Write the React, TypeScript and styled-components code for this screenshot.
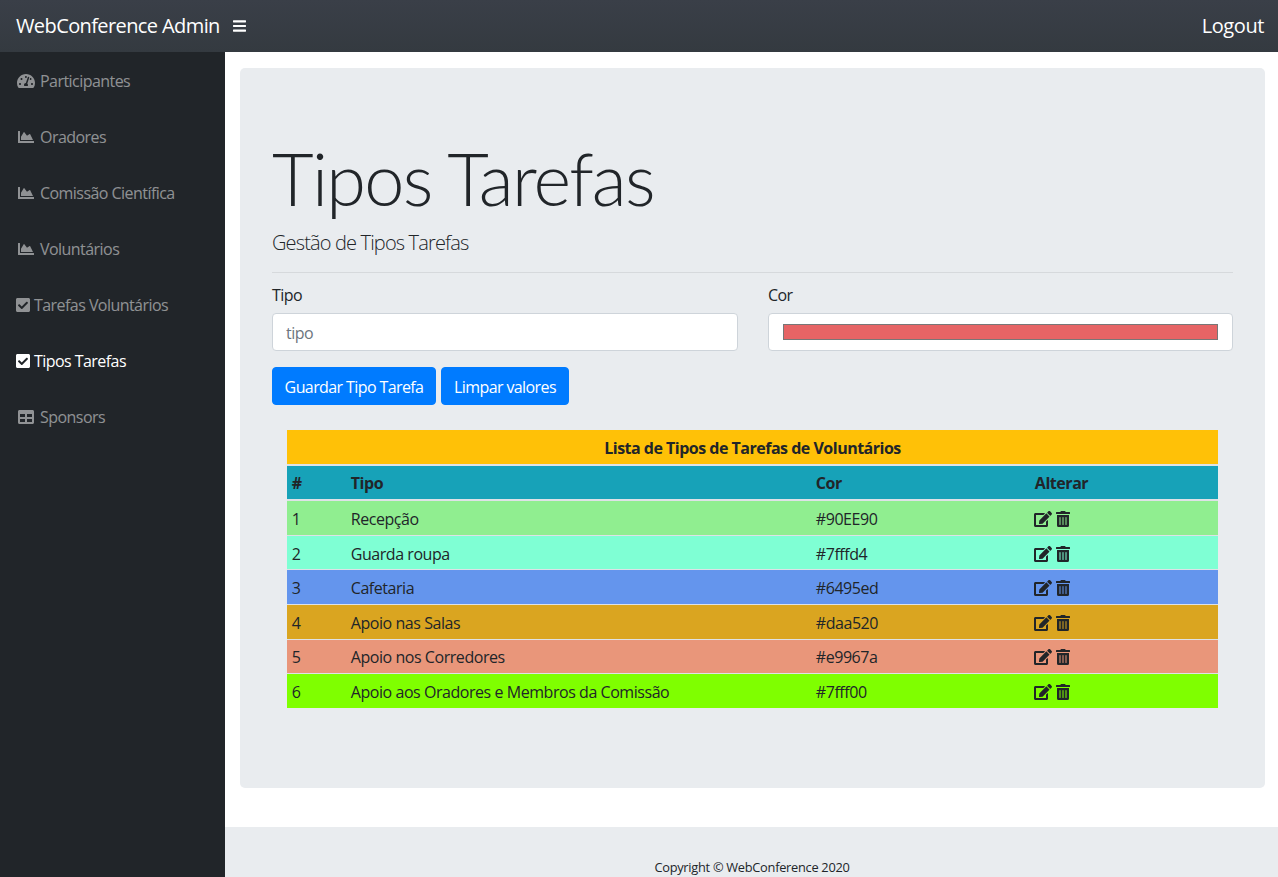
import React from "react";
import styled, { createGlobalStyle } from "styled-components";
import { FaTachometerAlt, FaChartArea, FaCheckSquare, FaTable, FaBars, FaEdit, FaTrashAlt } from "react-icons/fa";

const FONT = `"Open Sans", "Noto Sans", "Liberation Sans", sans-serif`;

const Global = createGlobalStyle`
  * { box-sizing: border-box; }
  html, body { margin: 0; padding: 0; height: 877px; overflow: hidden; }
  body { font-family: ${FONT}; font-size: 16px; line-height: 24px; color: #212529; background: #fff; }
`;

const Page = styled.div`display: flex; flex-direction: column; height: 877px; overflow: hidden;`;
const Navbar = styled.header`
  height: 52px; flex: none; display: flex; align-items: center; padding: 0 14px 0 16px; color: #fff;
  background: linear-gradient(180deg, #3a3f48, #343a40);
`;
const Brand = styled.span`font-size: 20px; line-height: 30px; letter-spacing: -0.6px;`;
const Toggle = styled.span`display: flex; margin-left: 13px; font-size: 14px; svg { width: 13px; height: 16px; }`;
const Logout = styled.span`margin-left: auto; font-size: 20px; letter-spacing: -0.4px;`;
const Body = styled.div`flex: 1; display: flex; min-height: 0;`;
const Sidebar = styled.nav`width: 225px; flex: none; background: #212529; display: flex; flex-direction: column; padding-top: 1px;`;
const NavItem = styled.a<{ $active?: boolean }>`
  height: 56px; display: flex; align-items: center; padding: 0 16px;
  color: ${(p) => (p.$active ? "#fff" : "rgba(255,255,255,.5)")};
  letter-spacing: -0.55px;
`;
const NavIcon = styled.span<{ $w: number }>`
  flex: none; display: flex; justify-content: center; width: ${(p) => p.$w}px; margin-right: 4px;
  svg { width: ${(p) => Math.min(p.$w, 18)}px; height: 16px; }
`;
const Column = styled.div`flex: 1; display: flex; flex-direction: column; min-width: 0;`;
const Main = styled.main`flex: none; height: 775px; padding: 16px 13px 0 15px;`;
const Jumbotron = styled.section`
  height: 720px; background: #e9ecef; border-radius: 5px; padding: 66px 32px 0;
`;
const Title = styled.h1`margin: 0; padding-top: 1px; font-family: Lato, ${FONT}; font-size: 72px; line-height: 86px; font-weight: 300; letter-spacing: -1.7px; color: #212529;`;
const Lead = styled.p`margin: 7px 0 0; font-size: 20px; line-height: 30px; font-weight: 300; letter-spacing: -0.85px;`;
const Rule = styled.hr`margin: 14px 0 0; border: 0; border-top: 1px solid #d6d9dc;`;
const FormRow = styled.div`display: grid; grid-template-columns: 466px 465px; column-gap: 30px; margin-top: 10px;`;
const Field = styled.label`display: flex; flex-direction: column; gap: 6px; letter-spacing: -0.55px;`;
const TextInput = styled.input`
  height: 38px; border: 1px solid #ced4da; border-radius: 4px; padding: 7px 13px 5px; font: inherit; background: #fff; letter-spacing: -0.55px;
  &::placeholder { color: #6c757d; opacity: 1; }
`;
const ColorInput = styled.input`
  display: block; width: 100%; height: 38px; border: 1px solid #ced4da; border-radius: 4px; padding: 6px 12px; background: #fff;
`;
const Actions = styled.div`display: flex; gap: 5px; margin-top: 16px;`;
const Button = styled.button<{ $w: number }>`
  width: ${(p) => p.$w}px; height: 38px; border: 1px solid #007bff; background: #007bff; color: #fff; border-radius: 4px; padding: 2px 0 0; font: inherit; letter-spacing: -0.6px;
`;
const Table = styled.table`
  width: 931px; margin: 25px 0 0 15px; border-collapse: collapse; table-layout: fixed;
  th, td { padding: 5.8px 4.8px 3.8px; text-align: left; border-top: 1px solid #dee2e6; height: 34.6px; letter-spacing: -0.45px; }
`;
const Caption = styled.th`background: #ffc107; && { text-align: center; border-top: 0; height: 34px; letter-spacing: -0.5px; }`;
const HeadRow = styled.tr`
  background: #17a2b8;
  th { border-top: 2px solid #dee2e6; border-bottom: 2px solid #dee2e6; }
`;
const Row = styled.tr<{ $c: string }>`background: ${(p) => p.$c};`;
const Icons = styled.span`
  display: flex; gap: 4px; margin: 0 0 0 -1px;
  svg { display: block; height: 16px; }
  svg:first-child { width: 18px; }
  svg:last-child { width: 14px; }
`;
const Footer = styled.footer`
  flex: 1; background: #e9ecef; display: flex; justify-content: center; align-items: flex-end;
  font-size: 12.8px; line-height: 18px; letter-spacing: -0.27px; padding: 0 0 1px 1px;
`;

const rows = [
  ["1", "Recepção", "#90EE90"],
  ["2", "Guarda roupa", "#7fffd4"],
  ["3", "Cafetaria", "#6495ed"],
  ["4", "Apoio nas Salas", "#daa520"],
  ["5", "Apoio nos Corredores", "#e9967a"],
  ["6", "Apoio aos Oradores e Membros da Comissão", "#7fff00"],
];
const nav: [React.ReactNode, string, number, boolean?][] = [
  [<FaTachometerAlt />, "Participantes", 20],
  [<FaChartArea />, "Oradores", 20],
  [<FaChartArea />, "Comissão Científica", 20],
  [<FaChartArea />, "Voluntários", 20],
  [<FaCheckSquare />, "Tarefas Voluntários", 14],
  [<FaCheckSquare />, "Tipos Tarefas", 14, true],
  [<FaTable />, "Sponsors", 20],
];

export default function App() {
  return (
    <Page>
      <Global />
      <Navbar>
        <Brand>WebConference Admin</Brand>
        <Toggle><FaBars /></Toggle>
        <Logout>Logout</Logout>
      </Navbar>
      <Body>
        <Sidebar>
          {nav.map(([icon, label, w, active]) => (
            <NavItem key={label} $active={active}><NavIcon $w={w}>{icon}</NavIcon>{label}</NavItem>
          ))}
        </Sidebar>
        <Column>
          <Main>
            <Jumbotron>
              <Title>Tipos Tarefas</Title>
              <Lead>Gestão de Tipos Tarefas</Lead>
              <Rule />
              <FormRow>
                <Field>Tipo<TextInput placeholder="tipo" /></Field>
                <Field>Cor<ColorInput type="color" defaultValue="#e66465" /></Field>
              </FormRow>
              <Actions>
                <Button $w={164}>Guardar Tipo Tarefa</Button>
                <Button $w={128}>Limpar valores</Button>
              </Actions>
              <Table>
                <colgroup><col width="59" /><col width="465" /><col width="219" /><col width="188" /></colgroup>
                <thead>
                  <tr><Caption colSpan={4}>Lista de Tipos de Tarefas de Voluntários</Caption></tr>
                  <HeadRow><th>#</th><th>Tipo</th><th>Cor</th><th>Alterar</th></HeadRow>
                </thead>
                <tbody>
                  {rows.map(([n, t, c]) => (
                    <Row key={n} $c={c}>
                      <td>{n}</td><td>{t}</td><td>{c}</td>
                      <td><Icons><FaEdit /><FaTrashAlt /></Icons></td>
                    </Row>
                  ))}
                </tbody>
              </Table>
            </Jumbotron>
          </Main>
          <Footer>Copyright © WebConference 2020</Footer>
        </Column>
      </Body>
    </Page>
  );
}
